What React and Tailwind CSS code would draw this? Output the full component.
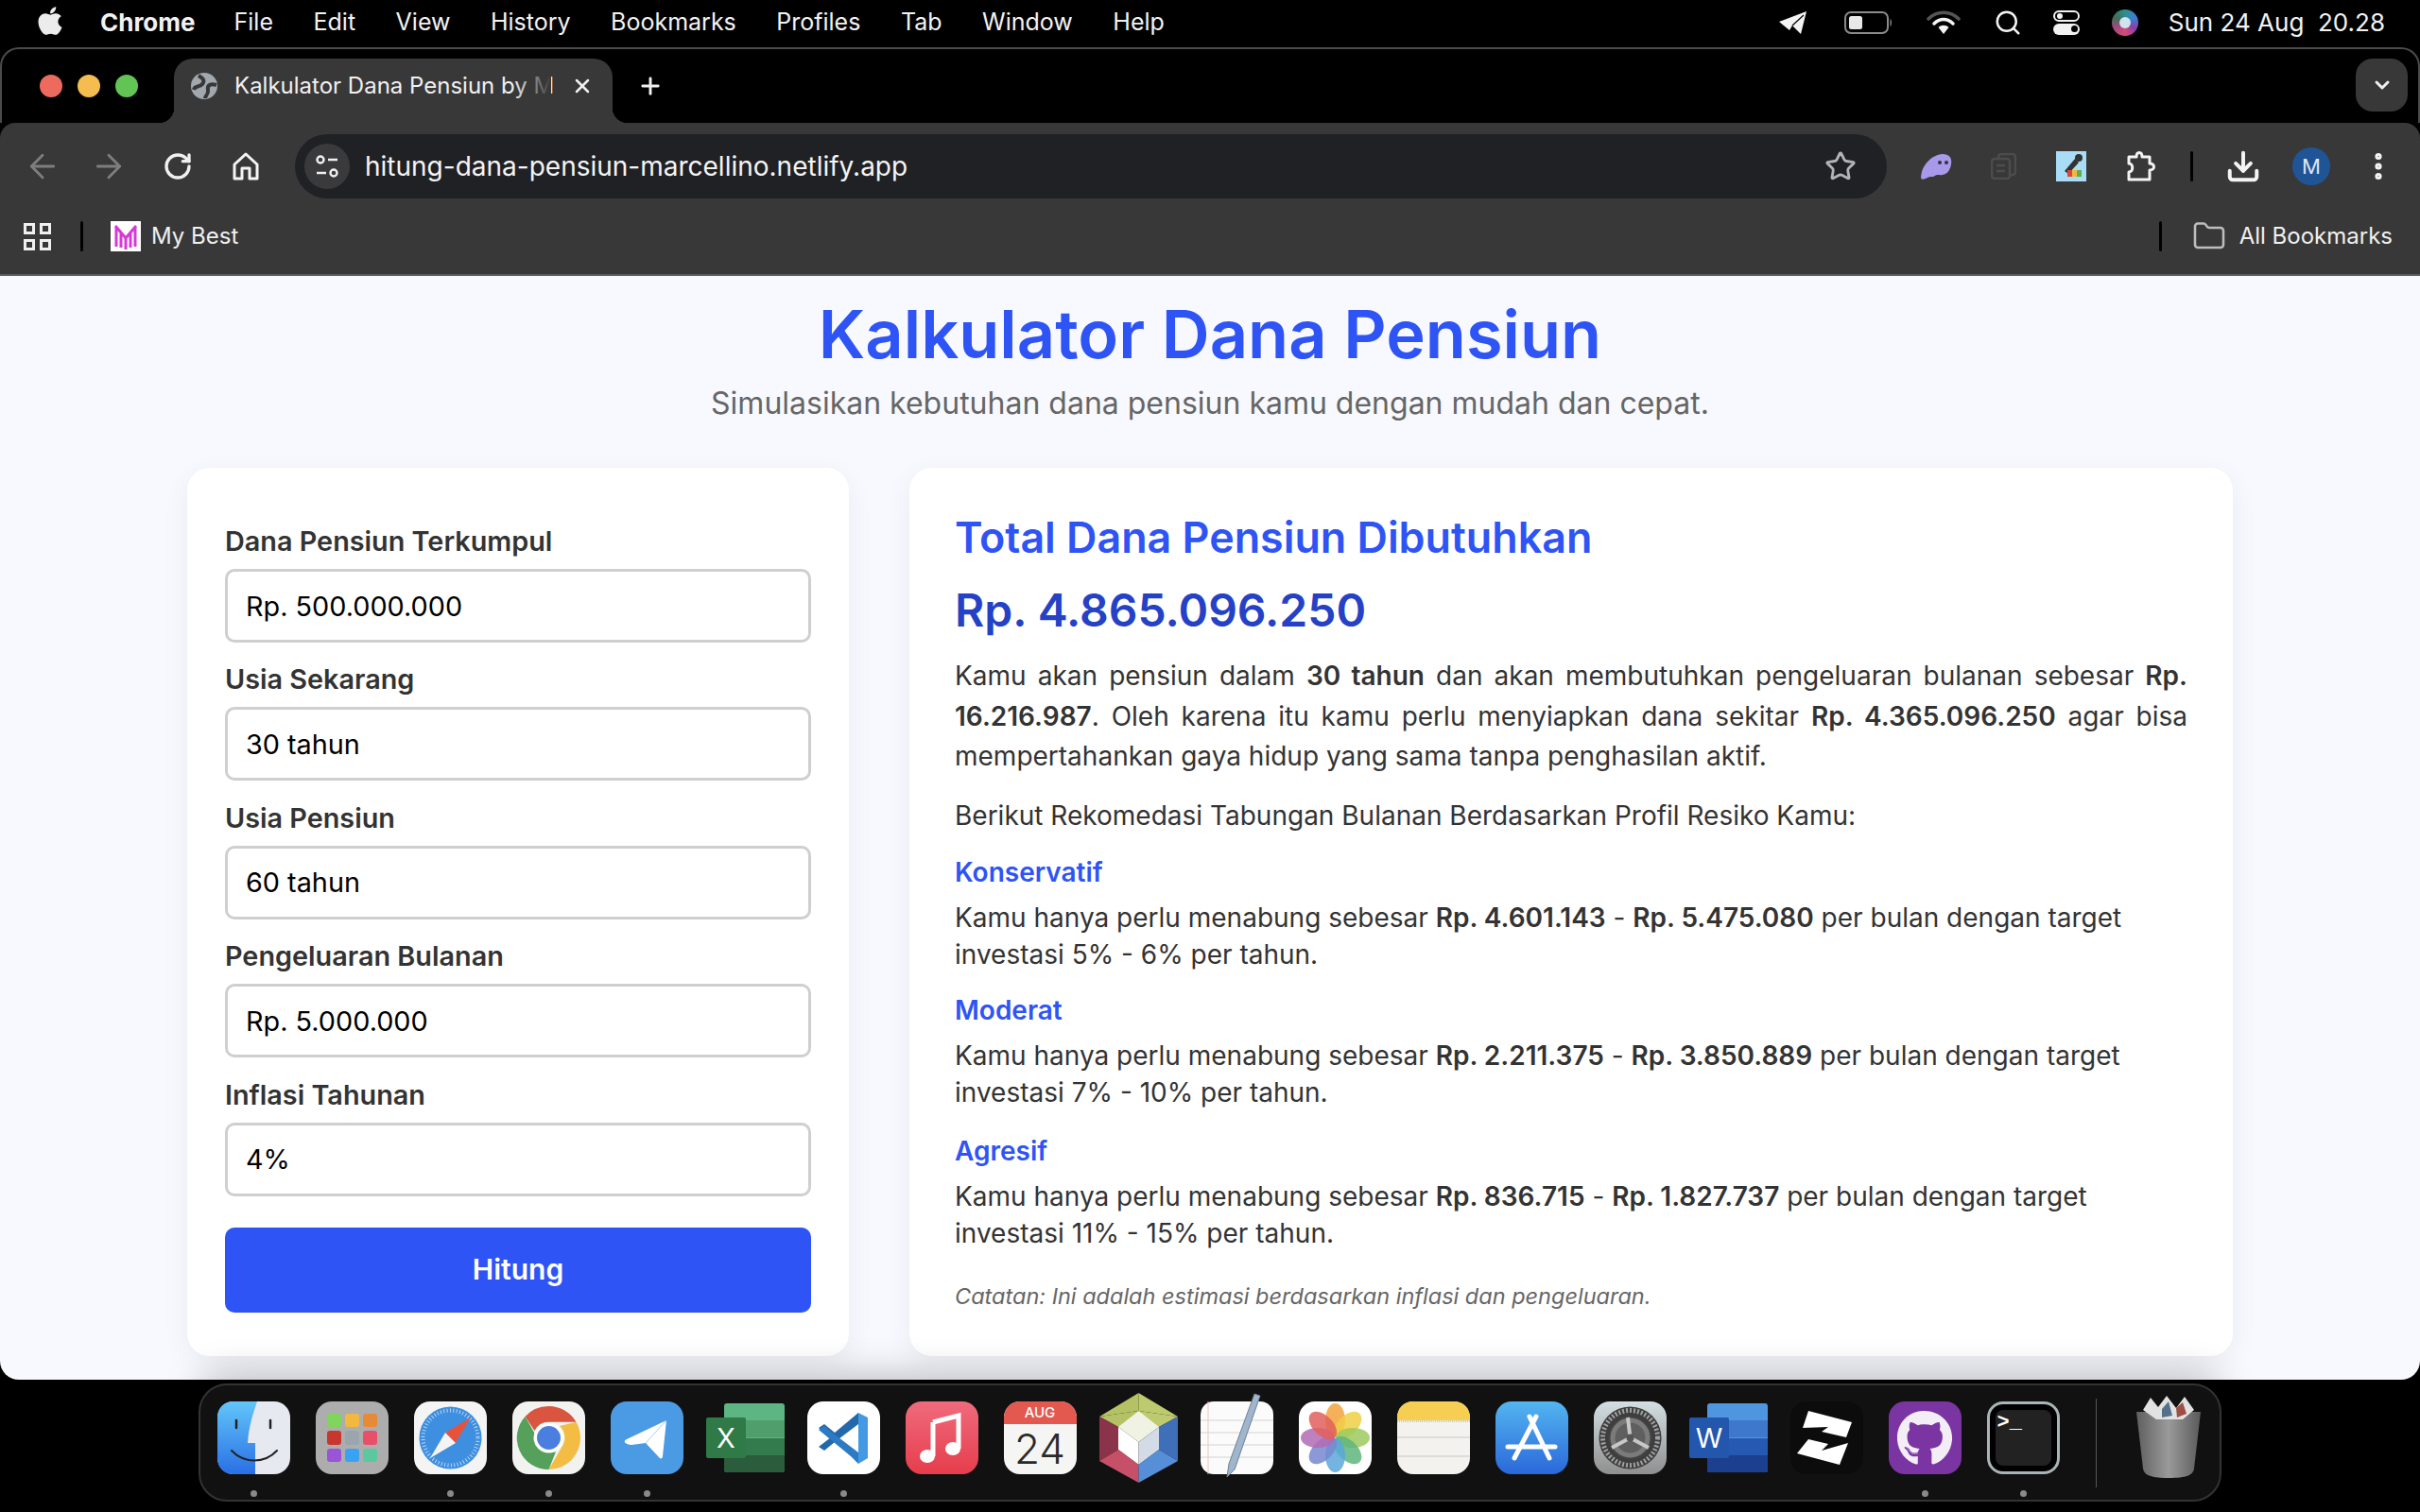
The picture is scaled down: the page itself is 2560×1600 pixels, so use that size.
import { ArrowLeft, ArrowRight, RotateCw, ChevronDown, Star, Plus, X, Search, Download, EllipsisVertical, Folder } from 'lucide-react';
import { FaApple, FaGithub } from 'react-icons/fa';

const menus = ['File', 'Edit', 'View', 'History', 'Bookmarks', 'Profiles', 'Tab', 'Window', 'Help'];

const fields = [
  { label: 'Dana Pensiun Terkumpul', value: 'Rp. 500.000.000' },
  { label: 'Usia Sekarang', value: '30 tahun' },
  { label: 'Usia Pensiun', value: '60 tahun' },
  { label: 'Pengeluaran Bulanan', value: 'Rp. 5.000.000' },
  { label: 'Inflasi Tahunan', value: '4%' },
];

const profiles = [
  { name: 'Konservatif', low: 'Rp. 4.601.143', high: 'Rp. 5.475.080', rate: '5% - 6%', gap: 'mt-[19px]' },
  { name: 'Moderat', low: 'Rp. 2.211.375', high: 'Rp. 3.850.889', rate: '7% - 10%', gap: 'mt-[18px]' },
  { name: 'Agresif', low: 'Rp. 836.715', high: 'Rp. 1.827.737', rate: '11% - 15%', gap: 'mt-[21px]' },
];

// dock icons, all drawn on a 77x77 box
const Finder = () => (
  <svg viewBox="0 0 77 77" className="w-full h-full">
    <defs>
      <linearGradient id="fb" x1="0" y1="0" x2="0" y2="1"><stop offset="0" stopColor="#62c6f9" /><stop offset="1" stopColor="#2a6fe6" /></linearGradient>
    </defs>
    <rect width="77" height="77" rx="17" fill="#e6e9ef" />
    <path d="M17 0H42C37 15 33 28 32 44H40V77H17C7 77 0 70 0 60V17C0 7 7 0 17 0Z" fill="url(#fb)" />
    <path d="M20 20v8M56 20v8" stroke="#222" strokeWidth="2.5" strokeLinecap="round" />
    <path d="M15 52C28 66 50 66 63 52" fill="none" stroke="#222" strokeWidth="2" strokeLinecap="round" />
  </svg>
);

const Launchpad = () => {
  const colors = ['#7fd65a', '#f3b93f', '#e68a36', '#c8372d', '#9aa5ad', '#e8506a', '#9a54d6', '#39a3f3', '#5bc8a0'];
  return (
    <div className="w-full h-full rounded-[17px] bg-[#adadad] grid grid-cols-3 gap-[4px] px-[12px] py-[13px]">
      {colors.map((c) => (
        <div key={c} className="rounded-[3px]" style={{ backgroundColor: c }} />
      ))}
    </div>
  );
};

const Safari = () => (
  <svg viewBox="0 0 77 77" className="w-full h-full">
    <rect width="77" height="77" rx="17" fill="#f4f4f4" />
    <circle cx="38.5" cy="38.5" r="33" fill="#3f8fe0" />
    <circle cx="38.5" cy="38.5" r="29" fill="none" stroke="#d5e6f8" strokeWidth="4" strokeDasharray="0.8 2.6" />
    <polygon points="60,17 33,33 44,44" fill="#e5533d" />
    <polygon points="17,60 33,33 44,44" fill="#f4f4f4" />
  </svg>
);

const ChromeLogo = () => (
  <svg viewBox="0 0 77 77" className="w-full h-full">
    <rect width="77" height="77" rx="17" fill="#f2f2f0" />
    <path d="M38.5 5A33.5 33.5 0 0 1 67.5 21.8H38.5A16.8 16.8 0 0 0 23.5 31L13.5 16A33.5 33.5 0 0 1 38.5 5Z" fill="#d9553f" />
    <path d="M67.5 21.8A33.5 33.5 0 0 1 38.5 72L53 47A16.8 16.8 0 0 0 50 26Z" fill="#f2bd42" />
    <path d="M13.5 16L28 41.5A16.8 16.8 0 0 0 46 53.3L38.5 72A33.5 33.5 0 0 1 13.5 16Z" fill="#55a05a" />
    <circle cx="38.5" cy="38.5" r="16" fill="#fff" />
    <circle cx="38.5" cy="38.5" r="12.5" fill="#4a7fe0" />
  </svg>
);

const Telegram = () => (
  <svg viewBox="0 0 77 77" className="w-full h-full">
    <rect width="77" height="77" rx="17" fill="#4a9ae4" />
    <path d="M59 20L55 58C55 61 52 61 51 59L37 44 22 46C14 45 13 42 17 40Z" fill="#fff" />
    <path d="M59 20L37 44" stroke="#4a9ae4" strokeWidth="0.5" />
  </svg>
);

const Office = ({ letter, dark, mid, light, top, badge }) => (
  <svg viewBox="0 0 83 73" className="w-full h-full overflow-visible">
    <rect x="19" y="0" width="64" height="73" rx="3" fill={top} />
    <rect x="19" y="18" width="64" height="18" fill={light} />
    <rect x="19" y="37" width="64" height="18" fill={mid} />
    <path d="M19 55H83V70a3 3 0 0 1-3 3H22a3 3 0 0 1-3-3Z" fill={dark} />
    <rect y="15" width="42" height="43" rx="2" fill={badge} />
    <text x="21" y="47" textAnchor="middle" fontFamily="Inter, sans-serif" fontSize="29" fill="#fff">{letter}</text>
  </svg>
);

const Excel = () => <Office letter="X" dark="#2b5c3b" mid="#337a4c" light="#4f9e6b" top="#5cb583" badge="#2f7a46" />;
const Word = () => <Office letter="W" dark="#1d3f8f" mid="#2559b2" light="#3d78cc" top="#4f96e0" badge="#2356ad" />;

const VsCode = () => (
  <svg viewBox="0 0 77 77" className="w-full h-full">
    <rect width="77" height="77" rx="17" fill="#fff" />
    <path d="M54 12L64 17V60L54 66Z" fill="#439ae3" />
    <path d="M54 12V24L29 43 18 52 12 48 25 38 12 28 18 24 29 33Z" fill="#2368ab" />
    <path d="M54 66V54L29 35 18 26 12 30 46 58Z" fill="#2d7ac4" />
  </svg>
);

const Music = () => (
  <svg viewBox="0 0 77 77" className="w-full h-full">
    <defs>
      <linearGradient id="mu" x1="0" y1="0" x2="0" y2="1"><stop offset="0" stopColor="#ef6b7c" /><stop offset="1" stopColor="#e63d4c" /></linearGradient>
    </defs>
    <rect width="77" height="77" rx="17" fill="url(#mu)" />
    <path d="M29 22L56 15V50" fill="none" stroke="#fff" strokeWidth="5" />
    <path d="M29 22V58" stroke="#fff" strokeWidth="5" />
    <ellipse cx="23" cy="58" rx="8" ry="7" fill="#fff" />
    <ellipse cx="50" cy="50" rx="8" ry="7" fill="#fff" />
  </svg>
);

const Calendar = () => (
  <div className="w-full h-full rounded-[17px] overflow-hidden bg-[#f5f5f3] flex flex-col items-center">
    <div className="w-full h-[24px] bg-[#e3584f] text-white text-[15px] font-medium leading-[24px] text-center">AUG</div>
    <div className="text-[#2a2a2a] text-[44px] font-light leading-[52px]">24</div>
  </div>
);

const Gem = () => (
  <svg viewBox="0 0 83 95" className="w-full h-full overflow-visible">
    <polygon points="41.5,0 41.5,19 0,25" fill="#b4c265" />
    <polygon points="41.5,0 83,25 41.5,19" fill="#bdca6d" />
    <polygon points="0,25 41.5,19 41.5,40 20,36" fill="#b4c265" />
    <polygon points="83,25 41.5,19 41.5,40 63,36" fill="#bdca6d" />
    <polygon points="41.5,19 63,36 41.5,52 20,36" fill="#f0f3e3" />
    <polygon points="0,25 20,36 20,60 0,72" fill="#8b334a" />
    <polygon points="83,25 63,36 63,60 83,72" fill="#3f6fb8" />
    <polygon points="20,36 41.5,52 41.5,76 20,60" fill="#fff" />
    <polygon points="63,36 41.5,52 41.5,76 63,60" fill="#d3dbe6" />
    <polygon points="0,72 20,60 41.5,76 41.5,95" fill="#c75069" />
    <polygon points="83,72 63,60 41.5,76 41.5,95" fill="#568fd8" />
  </svg>
);

const TextEdit = () => (
  <svg viewBox="0 0 77 77" className="w-full h-full overflow-visible">
    <rect width="77" height="77" rx="14" fill="#fbfbfb" />
    <path d="M0 20H77M0 33H77M0 46H77M0 59H77" stroke="#d4d4d6" strokeWidth="1.2" />
    <path d="M8 0V77" stroke="#eec5c0" strokeWidth="1" />
    <path d="M57 -8L63 -6 36 72 28 80 30 66Z" fill="#9fb6cc" stroke="#6c7f92" strokeWidth="1" />
  </svg>
);

const Photos = () => {
  const petals = ['#f3a33c', '#f0cf47', '#9ccb5d', '#5fb57c', '#5aa7dc', '#7788d0', '#b16bb5', '#e0605c'];
  return (
    <svg viewBox="0 0 77 77" className="w-full h-full">
      <rect width="77" height="77" rx="17" fill="#fff" />
      {petals.map((c, i) => (
        <ellipse key={c} cx="38.5" cy="20" rx="10.5" ry="18" fill={c} fillOpacity="0.85" transform={`rotate(${i * 45} 38.5 38.5)`} />
      ))}
    </svg>
  );
};

const Notes = () => (
  <svg viewBox="0 0 77 77" className="w-full h-full">
    <rect width="77" height="77" rx="17" fill="#f3f2ee" />
    <path d="M0 20V17C0 7 7 0 17 0H60C70 0 77 7 77 17V20Z" fill="#f6cf52" />
    <path d="M0 21H77" stroke="#bcbab2" strokeWidth="1.5" strokeDasharray="1 1" />
    <path d="M0 38H77M0 58H77" stroke="#d8d6d0" strokeWidth="1.5" />
  </svg>
);

const AppStore = () => (
  <svg viewBox="0 0 77 77" className="w-full h-full">
    <defs>
      <linearGradient id="as" x1="0" y1="0" x2="0" y2="1"><stop offset="0" stopColor="#53b5f0" /><stop offset="1" stopColor="#2a68da" /></linearGradient>
    </defs>
    <rect width="77" height="77" rx="17" fill="url(#as)" />
    <path d="M36 16L57 60M43 16L20 60M13 48H63" stroke="#fff" strokeWidth="5" strokeLinecap="round" fill="none" />
  </svg>
);

const SysPrefs = () => (
  <svg viewBox="0 0 77 77" className="w-full h-full">
    <defs>
      <linearGradient id="sp" x1="0" y1="0" x2="0" y2="1"><stop offset="0" stopColor="#d3dfe3" /><stop offset="1" stopColor="#8f8f8f" /></linearGradient>
    </defs>
    <rect width="77" height="77" rx="17" fill="url(#sp)" />
    <circle cx="38.5" cy="38.5" r="33" fill="#3e3e3e" />
    <circle cx="38.5" cy="38.5" r="29" fill="none" stroke="#a0a0a0" strokeWidth="5" strokeDasharray="2 2" />
    <circle cx="38.5" cy="38.5" r="22" fill="#7b7b7b" stroke="#444" strokeWidth="2" />
    <circle cx="38.5" cy="38.5" r="16" fill="#5f5f5f" />
    <path d="M38.5 38.5L36 17M38.5 38.5L19 49M38.5 38.5L58 49" stroke="#c8c8c8" strokeWidth="4" />
    <circle cx="38.5" cy="38.5" r="4" fill="#555" />
  </svg>
);

const Bolt = () => (
  <svg viewBox="0 0 77 77" className="w-full h-full">
    <rect width="77" height="77" rx="17" fill="#0c0c0c" />
    <polygon points="19,10 65,22 59,38 33,32 40,27 13,28" fill="#fff" />
    <polygon points="19,40 40,45 33,52 61,44 52,67 7,55" fill="#fff" />
  </svg>
);

const GithubDesktop = () => (
  <div className="w-full h-full rounded-[17px] bg-[#7a35a3] flex items-center justify-center">
    <FaGithub className="w-[60px] h-[60px] text-[#f3edf6]" />
  </div>
);

const Terminal = () => (
  <div className="w-full h-full rounded-[17px] border-[3px] border-[#a9b4b6] bg-black p-[6px]">
    <div className="w-full h-full rounded-[8px] bg-[#222] text-white text-[22px] font-bold leading-[22px] pl-[2px] pt-[3px] [font-family:'Liberation_Mono',monospace]">
      &gt;_
    </div>
  </div>
);

const Trash = () => (
  <svg viewBox="0 0 70 88" className="w-full h-full overflow-visible">
    <defs>
      <linearGradient id="tr" x1="0" y1="0" x2="1" y2="0"><stop offset="0" stopColor="#5f5f5f" /><stop offset="0.5" stopColor="#9a9a9a" /><stop offset="1" stopColor="#5a5a5a" /></linearGradient>
    </defs>
    <path d="M1 18L8 78C9 85 16 88 35 88S61 85 62 78L69 18Z" fill="url(#tr)" />
    <polygon points="8,16 16,3 24,13 33,1 43,14 52,2 62,16 50,26 22,26" fill="#e2e2e2" />
    <polygon points="28,15 35,7 39,22 28,24" fill="#55718a" />
    <polygon points="43,14 50,8 54,20 44,24" fill="#9e4f45" />
  </svg>
);

const dockApps = [
  { id: 'finder', Icon: Finder, open: true },
  { id: 'launchpad', Icon: Launchpad },
  { id: 'safari', Icon: Safari, open: true },
  { id: 'chrome', Icon: ChromeLogo, open: true },
  { id: 'telegram', Icon: Telegram, open: true },
  { id: 'excel', Icon: Excel, size: 'w-[83px] h-[73px] mt-[2px]' },
  { id: 'vscode', Icon: VsCode, open: true },
  { id: 'music', Icon: Music },
  { id: 'calendar', Icon: Calendar },
  { id: 'gem', Icon: Gem, size: 'w-[83px] h-[95px] -mt-[9px]' },
  { id: 'textedit', Icon: TextEdit },
  { id: 'photos', Icon: Photos },
  { id: 'notes', Icon: Notes },
  { id: 'appstore', Icon: AppStore },
  { id: 'prefs', Icon: SysPrefs },
  { id: 'word', Icon: Word, size: 'w-[83px] h-[73px] mt-[2px]' },
  { id: 'bolt', Icon: Bolt },
  { id: 'github', Icon: GithubDesktop, open: true },
  { id: 'terminal', Icon: Terminal, open: true },
];

function MenuBar() {
  return (
    <div className="h-[50px] bg-black text-[#f2f2f2] flex items-center text-[25px] pb-[3px] pl-[38px] pr-[37px]">
      <FaApple className="w-[30px] h-[34px] mb-[4px] text-[#ececec]" />
      <span className="ml-[38px] text-[26px] font-bold mr-[41px]">Chrome</span>
      <div className="flex gap-[42.5px]">
        {menus.map((m) => (
          <span key={m}>{m}</span>
        ))}
      </div>
      <div className="ml-auto flex items-center">
        <svg viewBox="0 0 30 24" className="w-[30px] h-[24px]">
          <path d="M29 0L23 24 14 15 11 20 0 11Z" fill="#f4f4f4" />
          <path d="M14 15L26 4" stroke="#000" strokeWidth="1.2" />
        </svg>
        <svg viewBox="0 0 52 24" className="w-[52px] h-[24px] ml-[39px]">
          <rect x="1" y="1" width="45" height="22" rx="6" fill="none" stroke="#8b8b8b" strokeWidth="2" />
          <rect x="5" y="5" width="14" height="14" rx="2.5" fill="#e8e8e8" />
          <path d="M48.5 8c2 1 2 7 0 8Z" fill="#8b8b8b" />
        </svg>
        <svg viewBox="0 0 36 26" className="w-[36px] h-[26px] ml-[35px]">
          <path d="M2 9C11 0 25 0 34 9" fill="none" stroke="#555" strokeWidth="3.5" strokeLinecap="round" />
          <path d="M8 14C14 8 22 8 28 14" fill="none" stroke="#f4f4f4" strokeWidth="3.5" strokeLinecap="round" />
          <path d="M12.5 18C15.5 15 20.5 15 23.5 18L18 25Z" fill="#f4f4f4" />
        </svg>
        <Search className="w-[30px] h-[30px] ml-[35px] text-[#f2f2f2]" strokeWidth={2} />
        <div className="ml-[33px] w-[28px] flex flex-col gap-[2px]">
          <div className="h-[12px] rounded-full border-2 border-[#f2f2f2] flex items-center pl-[2px]">
            <div className="w-[6px] h-[6px] rounded-full bg-[#f2f2f2]" />
          </div>
          <div className="h-[12px] rounded-full bg-[#f2f2f2] flex items-center justify-end pr-[2px]">
            <div className="w-[7px] h-[7px] rounded-full bg-black" />
          </div>
        </div>
        <div className="ml-[34px] w-[28px] h-[28px] rounded-full bg-[conic-gradient(#2c8f8c,#3a7fd0,#8a3fa8,#d64a7a,#a8477f,#3f6f5a,#2c8f8c)] flex items-center justify-center">
          <span className="w-[12px] h-[12px] rounded-full bg-[#cfe4ee]" />
        </div>
        <span className="ml-[32px] text-[26px] whitespace-pre">Sun 24 Aug  20.28</span>
      </div>
    </div>
  );
}

function TabStrip() {
  return (
    <div className="h-[80px] bg-black rounded-t-[20px] border-t-2 border-x-2 border-[#4b4b4b] flex items-end pl-[40px] pr-[11px]">
      <div className="flex gap-[16px] h-full items-center">
        <span className="w-[24px] h-[24px] rounded-full bg-[#ee6a5f]" />
        <span className="w-[24px] h-[24px] rounded-full bg-[#f5bd4f]" />
        <span className="w-[24px] h-[24px] rounded-full bg-[#61c454]" />
      </div>
      <div className="relative ml-[38px] w-[464px] h-[68px] bg-[#383838] rounded-t-[20px] flex items-center pl-[18px] pb-[10px] text-[#f0f0f0] text-[24px]">
        {/* little curves where the tab meets the toolbar */}
        <span className="absolute -left-[16px] bottom-0 w-[16px] h-[16px] bg-[radial-gradient(circle_at_0_0,transparent_16px,#383838_16.5px)]" />
        <span className="absolute -right-[16px] bottom-0 w-[16px] h-[16px] bg-[radial-gradient(circle_at_100%_0,transparent_16px,#383838_16.5px)]" />
        <svg viewBox="0 0 28 28" className="w-[28px] h-[28px] shrink-0">
          <circle cx="14" cy="14" r="14" fill="#a2a8b0" />
          <path d="M8 3C13 6 15 8 12 12S4 13 3 18M27 13C21 11 17 13 18 18S15 24 15 27" fill="none" stroke="#383838" strokeWidth="4" />
        </svg>
        <div className="relative ml-[18px] w-[335px] whitespace-nowrap">
          Kalkulator Dana Pensiun by M
          <span className="absolute right-0 top-0 w-[40px] h-full bg-gradient-to-r from-transparent to-[#383838]" />
        </div>
        <X className="ml-[21px] w-[24px] h-[24px] text-[#f0f0f0] shrink-0" strokeWidth={2.5} />
      </div>
      <Plus className="ml-[26px] mb-[25px] w-[28px] h-[28px] text-[#f0f0f0]" strokeWidth={2.5} />
      <div className="ml-auto mb-[12px] w-[55px] h-[56px] rounded-[18px] bg-[#383838] flex items-center justify-center">
        <ChevronDown className="w-[24px] h-[24px] text-[#f0f0f0]" strokeWidth={3} />
      </div>
    </div>
  );
}

function Toolbar() {
  return (
    <div className="bg-[#383838] rounded-t-[16px] h-[162px] pt-[12px] border-b-2 border-[#5b5b5b]">
      <div className="flex items-center h-[68px] pl-[25px]">
        <ArrowLeft className="w-[40px] h-[40px] shrink-0 text-[#7e7e7e]" strokeWidth={1.7} />
        <ArrowRight className="ml-[30px] w-[40px] h-[40px] shrink-0 text-[#7e7e7e]" strokeWidth={1.7} />
        <RotateCw className="ml-[37px] w-[32px] h-[32px] shrink-0 text-[#f0f0f0]" strokeWidth={2.5} />
        <svg viewBox="0 0 28 30" className="ml-[42px] w-[28px] h-[30px] shrink-0">
          <path d="M2 13L14 2 26 13V28H18V17H10V28H2Z" fill="none" stroke="#f4f4f4" strokeWidth="3" strokeLinejoin="round" />
        </svg>
        <div className="ml-[38px] w-[1684px] h-[68px] shrink-0 rounded-full bg-[#202124] flex items-center pl-[10px]">
          <div className="w-[48px] h-[48px] rounded-full bg-[#3a3a3c] flex items-center justify-center">
            <svg viewBox="0 0 26 24" className="w-[26px] h-[24px]">
              <circle cx="6" cy="5" r="3.5" fill="none" stroke="#f0f0f0" strokeWidth="2.4" />
              <path d="M14 5H24M2 19H12" stroke="#f0f0f0" strokeWidth="2.6" />
              <circle cx="20" cy="19" r="3.5" fill="none" stroke="#f0f0f0" strokeWidth="2.4" />
            </svg>
          </div>
          <span className="ml-[16px] text-[28px] text-[#f4f4f4]">hitung-dana-pensiun-marcellino.netlify.app</span>
          <Star className="ml-auto mr-[32px] w-[34px] h-[34px] text-[#b4b4b4]" strokeWidth={2} />
        </div>
        <svg viewBox="0 0 34 27" className="ml-[35px] w-[34px] h-[27px] shrink-0">
          <path d="M1 24C2 12 12 1 24 0 32 0 34 5 33 11 32 17 29 21 24 22 20 23 19 21 16 23 13 25 11 23 8 25 4 27 1 28 1 24Z" fill="#a899ea" />
          <circle cx="21" cy="9" r="2" fill="#333" />
          <circle cx="28" cy="9" r="2" fill="#333" />
        </svg>
        <svg viewBox="0 0 27 28" className="ml-[41px] w-[27px] h-[28px] shrink-0">
          <rect x="8" y="1" width="18" height="22" rx="3" fill="none" stroke="#4c4c4c" strokeWidth="2.5" />
          <rect x="1" y="6" width="19" height="21" rx="3" fill="#383838" stroke="#4c4c4c" strokeWidth="2.5" />
          <path d="M6 13H15M6 19H15" stroke="#4c4c4c" strokeWidth="2.5" />
        </svg>
        <svg viewBox="0 0 32 32" className="ml-[42px] w-[32px] h-[32px] shrink-0">
          <rect width="32" height="32" fill="#a9dcf5" />
          <path d="M9 21L20 8 24 12 13 24Z" fill="#333" />
          <circle cx="24" cy="7" r="4" fill="#333" />
          <rect x="12" y="20" width="5" height="7" fill="#d9453b" />
          <rect x="17" y="20" width="5" height="7" fill="#f0b93b" />
          <rect x="22" y="20" width="5" height="7" fill="#5fae4d" />
        </svg>
        <svg viewBox="0 0 32 32" className="ml-[42px] w-[32px] h-[32px] shrink-0">
          <path d="M3 6H11C11 0 17 0 17 6H25V13C31 13 31 20 25 20V30H3V22C8 22 8 13 3 13Z" fill="none" stroke="#f4f4f4" strokeWidth="3" strokeLinejoin="round" />
        </svg>
        <span className="ml-[36px] w-[3px] h-[32px] shrink-0 rounded-full bg-black" />
        <Download className="ml-[34px] w-[38px] h-[38px] shrink-0 text-[#f4f4f4]" strokeWidth={2.5} />
        <div className="ml-[33px] w-[40px] h-[40px] shrink-0 rounded-full bg-[#1f5596] text-[#dfe7f2] text-[22px] flex items-center justify-center">M</div>
        <EllipsisVertical className="ml-[33px] w-[36px] h-[36px] shrink-0 text-[#f4f4f4]" strokeWidth={2.8} />
      </div>
      <div className="flex items-center h-[32px] mt-[24px] pl-[25px] pr-[29px] text-[24px] text-[#f0f0f0]">
        <div className="grid grid-cols-2 gap-[5px] w-[29px]">
          <span className="h-[12px] border-[3px] border-[#f0f0f0]" />
          <span className="h-[12px] border-[3px] border-[#f0f0f0]" />
          <span className="h-[12px] border-[3px] border-[#f0f0f0]" />
          <span className="h-[12px] border-[3px] border-[#f0f0f0]" />
        </div>
        <span className="ml-[31px] w-[3px] h-[32px] rounded-full bg-black" />
        <svg viewBox="0 0 32 32" className="ml-[29px] w-[32px] h-[32px]">
          <rect width="32" height="32" fill="#fff" />
          <path d="M5 5L16 18 27 5M6 6V27M11 12V28M16 18V30M21 12V28M26 6V27" fill="none" stroke="#d63ad6" strokeWidth="3" />
        </svg>
        <span className="ml-[11px]">My Best</span>
        <span className="ml-auto w-[3px] h-[32px] rounded-full bg-black" />
        <Folder className="ml-[32px] w-[36px] h-[36px] text-[#bdbdbd]" strokeWidth={1.7} />
        <span className="ml-[14px]">All Bookmarks</span>
      </div>
    </div>
  );
}

function InputCard() {
  return (
    <div className="w-[700px] h-[940px] shrink-0 bg-white rounded-[24px] shadow-[0_8px_30px_rgba(0,0,0,0.06)] px-[40px] pt-[58px]">
      <div className="flex flex-col gap-[19.4px]">
        {fields.map((f) => (
          <div key={f.label}>
            <label className="block text-[28.8px] leading-[40px] font-semibold text-[#333] mb-[9px]">{f.label}</label>
            <input
              readOnly
              value={f.value}
              className="w-full h-[78px] border-[3px] border-[#cfcfcf] rounded-[10px] px-[19px] text-[28.8px] text-black bg-white outline-none"
            />
          </div>
        ))}
      </div>
      <button className="mt-[33px] w-full h-[90px] rounded-[10px] bg-[#2f54f5] text-white text-[30px] font-semibold">
        Hitung
      </button>
    </div>
  );
}

function ResultCard() {
  return (
    <div className="w-[1400px] h-[940px] shrink-0 bg-white rounded-[24px] shadow-[0_8px_30px_rgba(0,0,0,0.06)] pl-[48px] pr-[48px] pt-[46px] text-[#333] text-[28px]">
      <h2 className="text-[44.8px] leading-[56px] font-semibold text-[#2f54f5]">Total Dana Pensiun Dibutuhkan</h2>
      <div className="mt-[19px] text-[48px] leading-[60px] font-semibold text-[#2542c6]">Rp. 4.865.096.250</div>
      <p className="mt-[18px] leading-[42.5px] text-justify">
        Kamu akan pensiun dalam <strong className="font-semibold">30 tahun</strong> dan akan membutuhkan pengeluaran bulanan sebesar <strong className="font-semibold">Rp. 16.216.987</strong>. Oleh karena itu kamu perlu menyiapkan dana sekitar <strong className="font-semibold">Rp. 4.365.096.250</strong> agar bisa mempertahankan gaya hidup yang sama tanpa penghasilan aktif.
      </p>
      <p className="mt-[20px] leading-[42px]">Berikut Rekomedasi Tabungan Bulanan Berdasarkan Profil Resiko Kamu:</p>
      {profiles.map((p) => (
        <div key={p.name} className={p.gap}>
          <h4 className="text-[28px] leading-[40px] font-semibold text-[#2f54f5]">{p.name}</h4>
          <p className="mt-[9px] leading-[39.5px]">
            Kamu hanya perlu menabung sebesar <strong className="font-semibold">{p.low}</strong> - <strong className="font-semibold">{p.high}</strong> per bulan dengan target investasi {p.rate} per tahun.
          </p>
        </div>
      ))}
      <p className="mt-[29px] text-[23.5px] leading-[34px] italic text-[#666]">Catatan: Ini adalah estimasi berdasarkan inflasi dan pengeluaran.</p>
    </div>
  );
}

function Page() {
  return (
    <div className="h-[1168px] bg-[#f8f9ff] rounded-b-[20px] overflow-hidden">
      <h1 className="pt-[30px] text-center text-[70.4px] leading-[64px] font-semibold text-[#2f54f5]">Kalkulator Dana Pensiun</h1>
      <p className="mt-[20px] text-center text-[32px] leading-[42px] text-[#666]">Simulasikan kebutuhan dana pensiun kamu dengan mudah dan cepat.</p>
      <div className="mt-[47px] flex justify-center gap-[64px]">
        <InputCard />
        <ResultCard />
      </div>
    </div>
  );
}

function Dock() {
  return (
    <div className="relative z-10 mt-[4px] ml-[210px] w-[2140px] h-[125px] rounded-[30px] border-2 border-[#333] bg-[#111] shadow-[0_-6px_40px_rgba(0,0,0,0.28)] flex pl-[4px]">
      {dockApps.map(({ id, Icon, open, size }) => (
        <div key={id} className="relative w-[104px] shrink-0 flex justify-center pt-[17px]">
          <div className={size || 'w-[77px] h-[77px]'}>
            <Icon />
          </div>
          {open && <span className="absolute bottom-[3px] w-[7px] h-[7px] rounded-full bg-[#8a8a8a]" />}
        </div>
      ))}
      <span className="ml-[25px] mt-[14px] w-px h-[94px] bg-[#555]" />
      <div className="ml-[41px] mt-[10px] w-[70px] h-[88px]">
        <Trash />
      </div>
    </div>
  );
}

export default function App() {
  return (
    <div className="w-[2560px] h-[1600px] overflow-hidden bg-black [font-family:Inter,sans-serif]">
      <MenuBar />
      <TabStrip />
      <Toolbar />
      <Page />
      <Dock />
    </div>
  );
}
